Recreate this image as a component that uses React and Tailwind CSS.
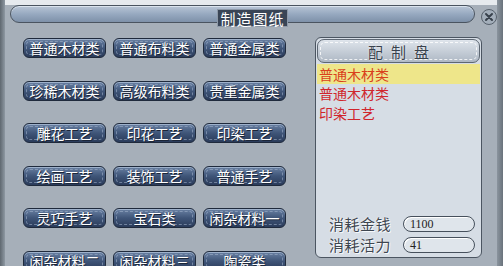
import React from "react";

const cjk = "font-['Noto_Sans_CJK_SC','Noto_Sans',sans-serif]";

const recipes = [
  "普通木材类", "普通布料类", "普通金属类",
  "珍稀木材类", "高级布料类", "贵重金属类",
  "雕花工艺", "印花工艺", "印染工艺",
  "绘画工艺", "装饰工艺", "普通手艺",
  "灵巧手艺", "宝石类", "闲杂材料一",
  "闲杂材料二", "闲杂材料三", "陶瓷类",
];

const picked = ["普通木材类", "普通木材类", "印染工艺"];

function RecipeButton({ label }) {
  return (
    <button className="h-[20px] w-[83px] rounded-[6px] border border-[#1f2a3c] bg-gradient-to-b from-[#6b82a4] via-[#3f5578] to-[#2a3b5a] p-[2px] shadow-[inset_0_1px_0_#9fb2cc]">
      <span className="flex h-full w-full items-center justify-center rounded-[4px] border border-dashed border-[#9fb0c9]/60 text-[14px] leading-none text-white [text-shadow:1px_1px_0_#1c2638]">
        {label}
      </span>
    </button>
  );
}

function CostRow({ label, value }) {
  return (
    <div className="flex h-[21px] items-center">
      <span className="w-[74px] text-[15px] leading-none tracking-[0.5px] text-[#3e4650] [text-shadow:0_0_2px_#fff,1px_1px_0_#f4f7fa]">
        {label}
      </span>
      <div className="flex h-[16px] w-[72px] items-center rounded-full border border-[#46505c] bg-[#dfe5eb] pl-[6px] shadow-[inset_1px_1px_0_#fff]">
        <span className="font-['Liberation_Serif',serif] text-[12px] leading-none text-[#222]">{value}</span>
      </div>
    </div>
  );
}

export default function App() {
  return (
    <div className={"flex h-[266px] w-[503px] overflow-hidden bg-[#a6afb9] " + cjk}>
      <div className="w-[5px] bg-gradient-to-r from-[#5f6870] to-[#8e98a2]" />

      <div className="flex flex-1 flex-col">
        {/* title bar */}
        <div className="relative h-[28px] pt-[5px]">
          <div className="absolute inset-x-0 top-0 h-[5px] bg-[#e6eaee]" />
          <div className="ml-[5px] h-[18px] w-[465px] rounded-full border border-[#4a5460] bg-gradient-to-b from-[#b9c6d6] via-[#97a9c0] to-[#7e91a9] shadow-[inset_0_1px_0_#dbe4ee]" />
          <div className="absolute left-[212px] top-[9px] flex h-[18px] w-[71px] items-center justify-center border border-[#8d99a8] bg-[#394556] text-[15px] leading-none tracking-[1px] text-white">
            制造图纸
          </div>
          <div className="absolute left-[476px] top-[9px] flex h-[16px] w-[16px] items-center justify-center rounded-full border border-[#57616c] bg-[#a3aeba]">
            <svg width="10" height="10" viewBox="0 0 10 10">
              <path d="M2 2 L8 8 M8 2 L2 8" stroke="#38414c" strokeWidth="2" strokeLinecap="round" />
            </svg>
          </div>
        </div>

        <div className="flex items-start">
          {/* recipe grid */}
          <div className="ml-[18px] mt-[15px] grid grid-cols-[83px_83px_83px] gap-x-[7px] gap-y-[22.5px]">
            {recipes.map((r, i) => (
              <RecipeButton key={i} label={r} />
            ))}
          </div>

          {/* crafting panel */}
          <div className="ml-[29px] mt-[14px] flex h-[221px] w-[167px] flex-col rounded-[6px] border border-[#4b5561] bg-[#d6dde5] p-[1px]">
            <div className="flex h-[24px] items-center justify-center rounded-[7px] border border-[#5d6773] bg-gradient-to-b from-[#dfe5ec] to-[#aeb8c4] p-[2px]">
              <span className="flex h-full w-full items-center justify-center rounded-[5px] border border-dashed border-white/80 pl-[8px] text-[15px] leading-none tracking-[8px] text-[#39424d] [text-shadow:0_0_2px_#fff]">
                配制盘
              </span>
            </div>
            <div className="mt-[1px] flex flex-col">
              {picked.map((p, i) => (
                <div
                  key={i}
                  className={
                    "flex h-[19.5px] items-center pl-[2px] text-[14px] leading-none text-[#d0262c] " +
                    (i === 0 ? "bg-[#eee68a] text-[#d9401c]" : "")
                  }
                >
                  {p}
                </div>
              ))}
            </div>
            <div className="mt-auto pb-[1px] pl-[12px]">
              <CostRow label="消耗金钱" value="1100" />
              <CostRow label="消耗活力" value="41" />
            </div>
          </div>
        </div>
      </div>

      <div className="w-[6px] bg-gradient-to-r from-[#8a949e] to-[#6a737c]" />
    </div>
  );
}
